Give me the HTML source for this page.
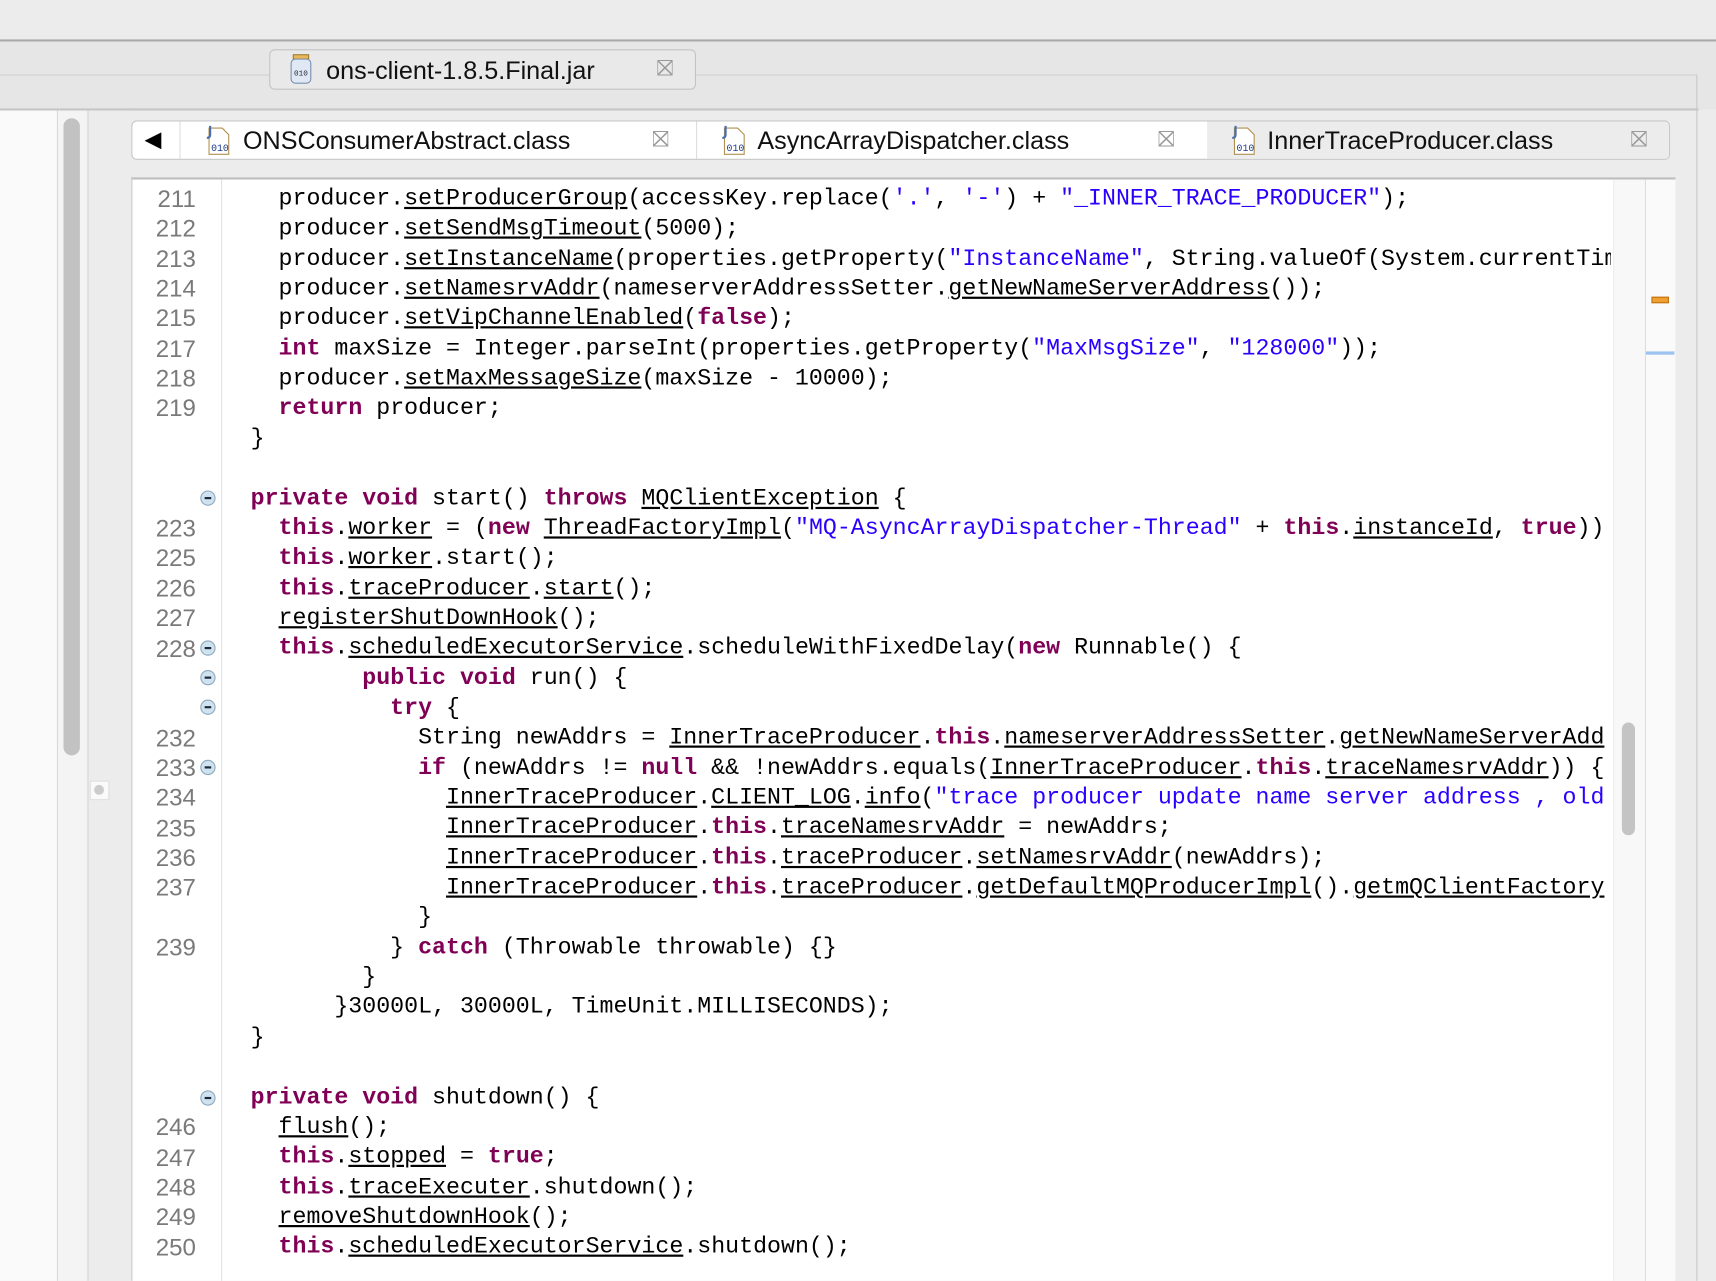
<!DOCTYPE html>
<html><head><meta charset="utf-8"><style>
html,body{margin:0;padding:0;width:1716px;height:1248px;overflow:hidden;background:#ececec}
#f{position:absolute;left:0;top:0;width:1568px;height:1170px;transform:scale(1.09439,1.09474);transform-origin:0 0;background:#ececec;font-family:"Liberation Sans",sans-serif}
.a{position:absolute}
.code{position:absolute;left:229px;top:169px;width:1243px;height:1000px;overflow:hidden}
.r{position:absolute;left:0;height:27.35px;line-height:27.35px;white-space:pre;font-family:"Liberation Mono",monospace;font-size:21.25px;color:#000}
.ln{position:absolute;left:0;top:2px}
.n{position:absolute;left:120px;width:59px;text-align:right;height:27.35px;line-height:27.35px;font-family:"Liberation Sans",sans-serif;font-size:22px;color:#7a7a7a}
.k{color:#7f0055;font-weight:bold}
.s{color:#2a00ff}
u{text-decoration:underline;text-underline-offset:2px}
.fold{position:absolute;left:183px;width:14px;height:14px;border-radius:50%;background:#cfe2f0;border:1px solid #8fa8bd;box-sizing:border-box}
.fold:after{content:"";position:absolute;left:3px;top:5px;width:6px;height:2px;background:#1a2a3a}
.tab{position:absolute;top:110px;height:36px;font-size:23px;line-height:36px;color:#111}
</style></head><body><div id="f">
<div class="a" style="left:0;top:36px;width:1568px;height:2px;background:#a9a9a9"></div>
<div class="a" style="left:0;top:38px;width:1568px;height:62px;background:#e6e6e6"></div>
<div class="a" style="left:0;top:68px;width:1550px;height:1px;background:#d0d0d0"></div>
<div class="a" style="left:0;top:99px;width:1552px;height:2px;background:#c6c6c6"></div>
<div class="a" style="left:1550px;top:68px;width:1px;height:1102px;background:#c8c8c8"></div>
<div class="a" style="left:246px;top:45px;width:390px;height:37px;border:1px solid #c4c4c4;border-radius:5px;background:#e9e9e9;box-sizing:border-box"></div>
<svg class="a" style="left:264px;top:49px" width="24" height="30" viewBox="0 0 24 30"><rect x="4" y="1" width="14" height="4" fill="#e8b75a" stroke="#a07a30"/><rect x="2" y="5" width="18" height="22" rx="4" fill="#dfe8f4" stroke="#7890b0"/><text x="11" y="20" font-size="7" text-anchor="middle" font-family="Liberation Mono" fill="#223">010</text></svg>
<div class="a" style="left:298px;top:46px;line-height:37px;font-size:23px;color:#111">ons-client-1.8.5.Final.jar</div>
<div class="a" style="left:600px;top:45px;line-height:37px;font-size:20px;color:#999">⛝</div>
<div class="a" style="left:0;top:101px;width:52px;height:1069px;background:#fafafa;border-right:1px solid #d8d8d8"></div>
<div class="a" style="left:53px;top:101px;width:26px;height:1069px;background:#f4f4f4"></div>
<div class="a" style="left:58px;top:108px;width:15px;height:582px;border-radius:8px;background:#c2c2c2"></div>
<div class="a" style="left:80px;top:101px;width:40px;height:1069px;background:#ececec;border-left:1px solid #d8d8d8"></div>
<div class="a" style="left:82px;top:713px;width:18px;height:18px;background:#fafafa;border:1px solid #ddd;box-sizing:border-box"></div>
<div class="a" style="left:86px;top:717px;width:9px;height:9px;border-radius:50%;background:#ccc"></div>
<div class="a" style="left:120px;top:110px;width:1406px;height:36px;background:#fff;border:1px solid #c8c8c8;border-radius:5px;box-sizing:border-box"></div>
<div class="a" style="left:1103px;top:111px;width:422px;height:34px;background:#ececec;border-radius:0 5px 5px 0"></div>
<div class="a" style="left:164px;top:111px;width:1px;height:34px;background:#ddd"></div>
<div class="a" style="left:636px;top:111px;width:1px;height:34px;background:#ddd"></div>
<div class="a" style="left:132px;top:110px;font-size:20px;line-height:36px">◀</div>
<svg class="a" style="left:186px;top:113px" width="28" height="30" viewBox="0 0 28 30"><path d="M5 4h12l6 6v18H5z" fill="#fff" stroke="#b09050"/><path d="M6 2v8q0 3-3 3" fill="none" stroke="#4a6fb0" stroke-width="2"/><text x="15" y="25" font-size="9" text-anchor="middle" font-family="Liberation Mono" fill="#1a3a8a">010</text></svg>
<div class="tab" style="left:222px">ONSConsumerAbstract.class</div>
<div class="a" style="left:596px;top:110px;line-height:36px;font-size:20px;color:#999">⛝</div>
<svg class="a" style="left:657px;top:113px" width="28" height="30" viewBox="0 0 28 30"><path d="M5 4h12l6 6v18H5z" fill="#fff" stroke="#b09050"/><path d="M6 2v8q0 3-3 3" fill="none" stroke="#4a6fb0" stroke-width="2"/><text x="15" y="25" font-size="9" text-anchor="middle" font-family="Liberation Mono" fill="#1a3a8a">010</text></svg>
<div class="tab" style="left:692px">AsyncArrayDispatcher.class</div>
<div class="a" style="left:1058px;top:110px;line-height:36px;font-size:20px;color:#999">⛝</div>
<svg class="a" style="left:1123px;top:113px" width="28" height="30" viewBox="0 0 28 30"><path d="M5 4h12l6 6v18H5z" fill="#fff" stroke="#b09050"/><path d="M6 2v8q0 3-3 3" fill="none" stroke="#4a6fb0" stroke-width="2"/><text x="15" y="25" font-size="9" text-anchor="middle" font-family="Liberation Mono" fill="#1a3a8a">010</text></svg>
<div class="tab" style="left:1158px">InnerTraceProducer.class</div>
<div class="a" style="left:1490px;top:110px;line-height:36px;font-size:20px;color:#999">⛝</div>
<div class="a" style="left:120px;top:162px;width:1411px;height:1008px;background:#fff;border-top:2px solid #bdbdbd;border-left:1px solid #c8c8c8;border-right:1px solid #c8c8c8;box-sizing:border-box"></div>
<div class="a" style="left:202px;top:164px;width:1px;height:1006px;background:#e2e2e2"></div>
<div class="a" style="left:1474px;top:164px;width:28px;height:1006px;background:#f8f8f8;border-left:1px solid #eee"></div>
<div class="a" style="left:1482px;top:660px;width:12px;height:103px;border-radius:6px;background:#c4c4c4"></div>
<div class="a" style="left:1503px;top:164px;width:27px;height:1006px;background:#fafafa;border-left:1px solid #ddd"></div>
<div class="a" style="left:1509px;top:271px;width:16px;height:6px;background:#f0a030;border:1px solid #c07010;box-sizing:border-box"></div>
<div class="a" style="left:1504px;top:321px;width:26px;height:3px;background:#9cc4ee"></div>

<div class="a" style="left:0;top:2px;width:1px;height:1px">
<div class="n" style="top:166px">211</div><div class="n" style="top:193.4px">212</div><div class="n" style="top:220.7px">213</div><div class="n" style="top:248px">214</div><div class="n" style="top:275.4px">215</div><div class="n" style="top:302.7px">217</div><div class="n" style="top:330.1px">218</div><div class="n" style="top:357.4px">219</div>
<div class="n" style="top:467px">223</div><div class="n" style="top:494.4px">225</div><div class="n" style="top:521.8px">226</div><div class="n" style="top:549.1px">227</div><div class="n" style="top:576.5px">228</div>
<div class="n" style="top:658.5px">232</div><div class="n" style="top:685.9px">233</div><div class="n" style="top:713.2px">234</div><div class="n" style="top:740.6px">235</div><div class="n" style="top:767.9px">236</div><div class="n" style="top:795.3px">237</div><div class="n" style="top:850px">239</div>
<div class="n" style="top:1014.1px">246</div><div class="n" style="top:1041.5px">247</div><div class="n" style="top:1068.8px">248</div><div class="n" style="top:1096.2px">249</div><div class="n" style="top:1123.5px">250</div>
<div class="fold" style="top:446px"></div><div class="fold" style="top:583px"></div><div class="fold" style="top:610px"></div><div class="fold" style="top:637px"></div><div class="fold" style="top:692px"></div><div class="fold" style="top:994px"></div>
</div>

<div class="code">
<div class="r" style="top:0">  producer.<u>setProducerGroup</u>(accessKey.replace(<span class="s">'.'</span>, <span class="s">'-'</span>) + <span class="s">"_INNER_TRACE_PRODUCER"</span>);</div>
<div class="r" style="top:27.35px">  producer.<u>setSendMsgTimeout</u>(5000);</div>
<div class="r" style="top:54.7px">  producer.<u>setInstanceName</u>(properties.getProperty(<span class="s">"InstanceName"</span>, String.valueOf(System.currentTimeMillis())));</div>
<div class="r" style="top:82.05px">  producer.<u>setNamesrvAddr</u>(nameserverAddressSetter.<u>getNewNameServerAddress</u>());</div>
<div class="r" style="top:109.4px">  producer.<u>setVipChannelEnabled</u>(<span class="k">false</span>);</div>
<div class="r" style="top:136.75px">  <span class="k">int</span> maxSize = Integer.parseInt(properties.getProperty(<span class="s">"MaxMsgSize"</span>, <span class="s">"128000"</span>));</div>
<div class="r" style="top:164.1px">  producer.<u>setMaxMessageSize</u>(maxSize - 10000);</div>
<div class="r" style="top:191.45px">  <span class="k">return</span> producer;</div>
<div class="r" style="top:218.8px">}</div>
<div class="r" style="top:273.5px"><span class="k">private void</span> start() <span class="k">throws</span> <u>MQClientException</u> {</div>
<div class="r" style="top:300.85px">  <span class="k">this</span>.<u>worker</u> = (<span class="k">new</span> <u>ThreadFactoryImpl</u>(<span class="s">"MQ-AsyncArrayDispatcher-Thread"</span> + <span class="k">this</span>.<u>instanceId</u>, <span class="k">true</span>))</div>
<div class="r" style="top:328.2px">  <span class="k">this</span>.<u>worker</u>.start();</div>
<div class="r" style="top:355.55px">  <span class="k">this</span>.<u>traceProducer</u>.<u>start</u>();</div>
<div class="r" style="top:382.9px">  <u>registerShutDownHook</u>();</div>
<div class="r" style="top:410.25px">  <span class="k">this</span>.<u>scheduledExecutorService</u>.scheduleWithFixedDelay(<span class="k">new</span> Runnable() {</div>
<div class="r" style="top:437.6px">        <span class="k">public void</span> run() {</div>
<div class="r" style="top:464.95px">          <span class="k">try</span> {</div>
<div class="r" style="top:492.3px">            String newAddrs = <u>InnerTraceProducer</u>.<span class="k">this</span>.<u>nameserverAddressSetter</u>.<u>getNewNameServerAdd</u></div>
<div class="r" style="top:519.65px">            <span class="k">if</span> (newAddrs != <span class="k">null</span> &amp;&amp; !newAddrs.equals(<u>InnerTraceProducer</u>.<span class="k">this</span>.<u>traceNamesrvAddr</u>)) {</div>
<div class="r" style="top:547px">              <u>InnerTraceProducer</u>.<u>CLIENT_LOG</u>.<u>info</u>(<span class="s">"trace producer update name server address , old</span></div>
<div class="r" style="top:574.35px">              <u>InnerTraceProducer</u>.<span class="k">this</span>.<u>traceNamesrvAddr</u> = newAddrs;</div>
<div class="r" style="top:601.7px">              <u>InnerTraceProducer</u>.<span class="k">this</span>.<u>traceProducer</u>.<u>setNamesrvAddr</u>(newAddrs);</div>
<div class="r" style="top:629.05px">              <u>InnerTraceProducer</u>.<span class="k">this</span>.<u>traceProducer</u>.<u>getDefaultMQProducerImpl</u>().<u>getmQClientFactory</u></div>
<div class="r" style="top:656.4px">            }</div>
<div class="r" style="top:683.75px">          } <span class="k">catch</span> (Throwable throwable) {}</div>
<div class="r" style="top:711.1px">        }</div>
<div class="r" style="top:738.45px">      }30000L, 30000L, TimeUnit.MILLISECONDS);</div>
<div class="r" style="top:765.8px">}</div>
<div class="r" style="top:820.5px"><span class="k">private void</span> shutdown() {</div>
<div class="r" style="top:847.85px">  <u>flush</u>();</div>
<div class="r" style="top:875.2px">  <span class="k">this</span>.<u>stopped</u> = <span class="k">true</span>;</div>
<div class="r" style="top:902.55px">  <span class="k">this</span>.<u>traceExecuter</u>.shutdown();</div>
<div class="r" style="top:929.9px">  <u>removeShutdownHook</u>();</div>
<div class="r" style="top:957.25px">  <span class="k">this</span>.<u>scheduledExecutorService</u>.shutdown();</div>
</div>
</div></body></html>
